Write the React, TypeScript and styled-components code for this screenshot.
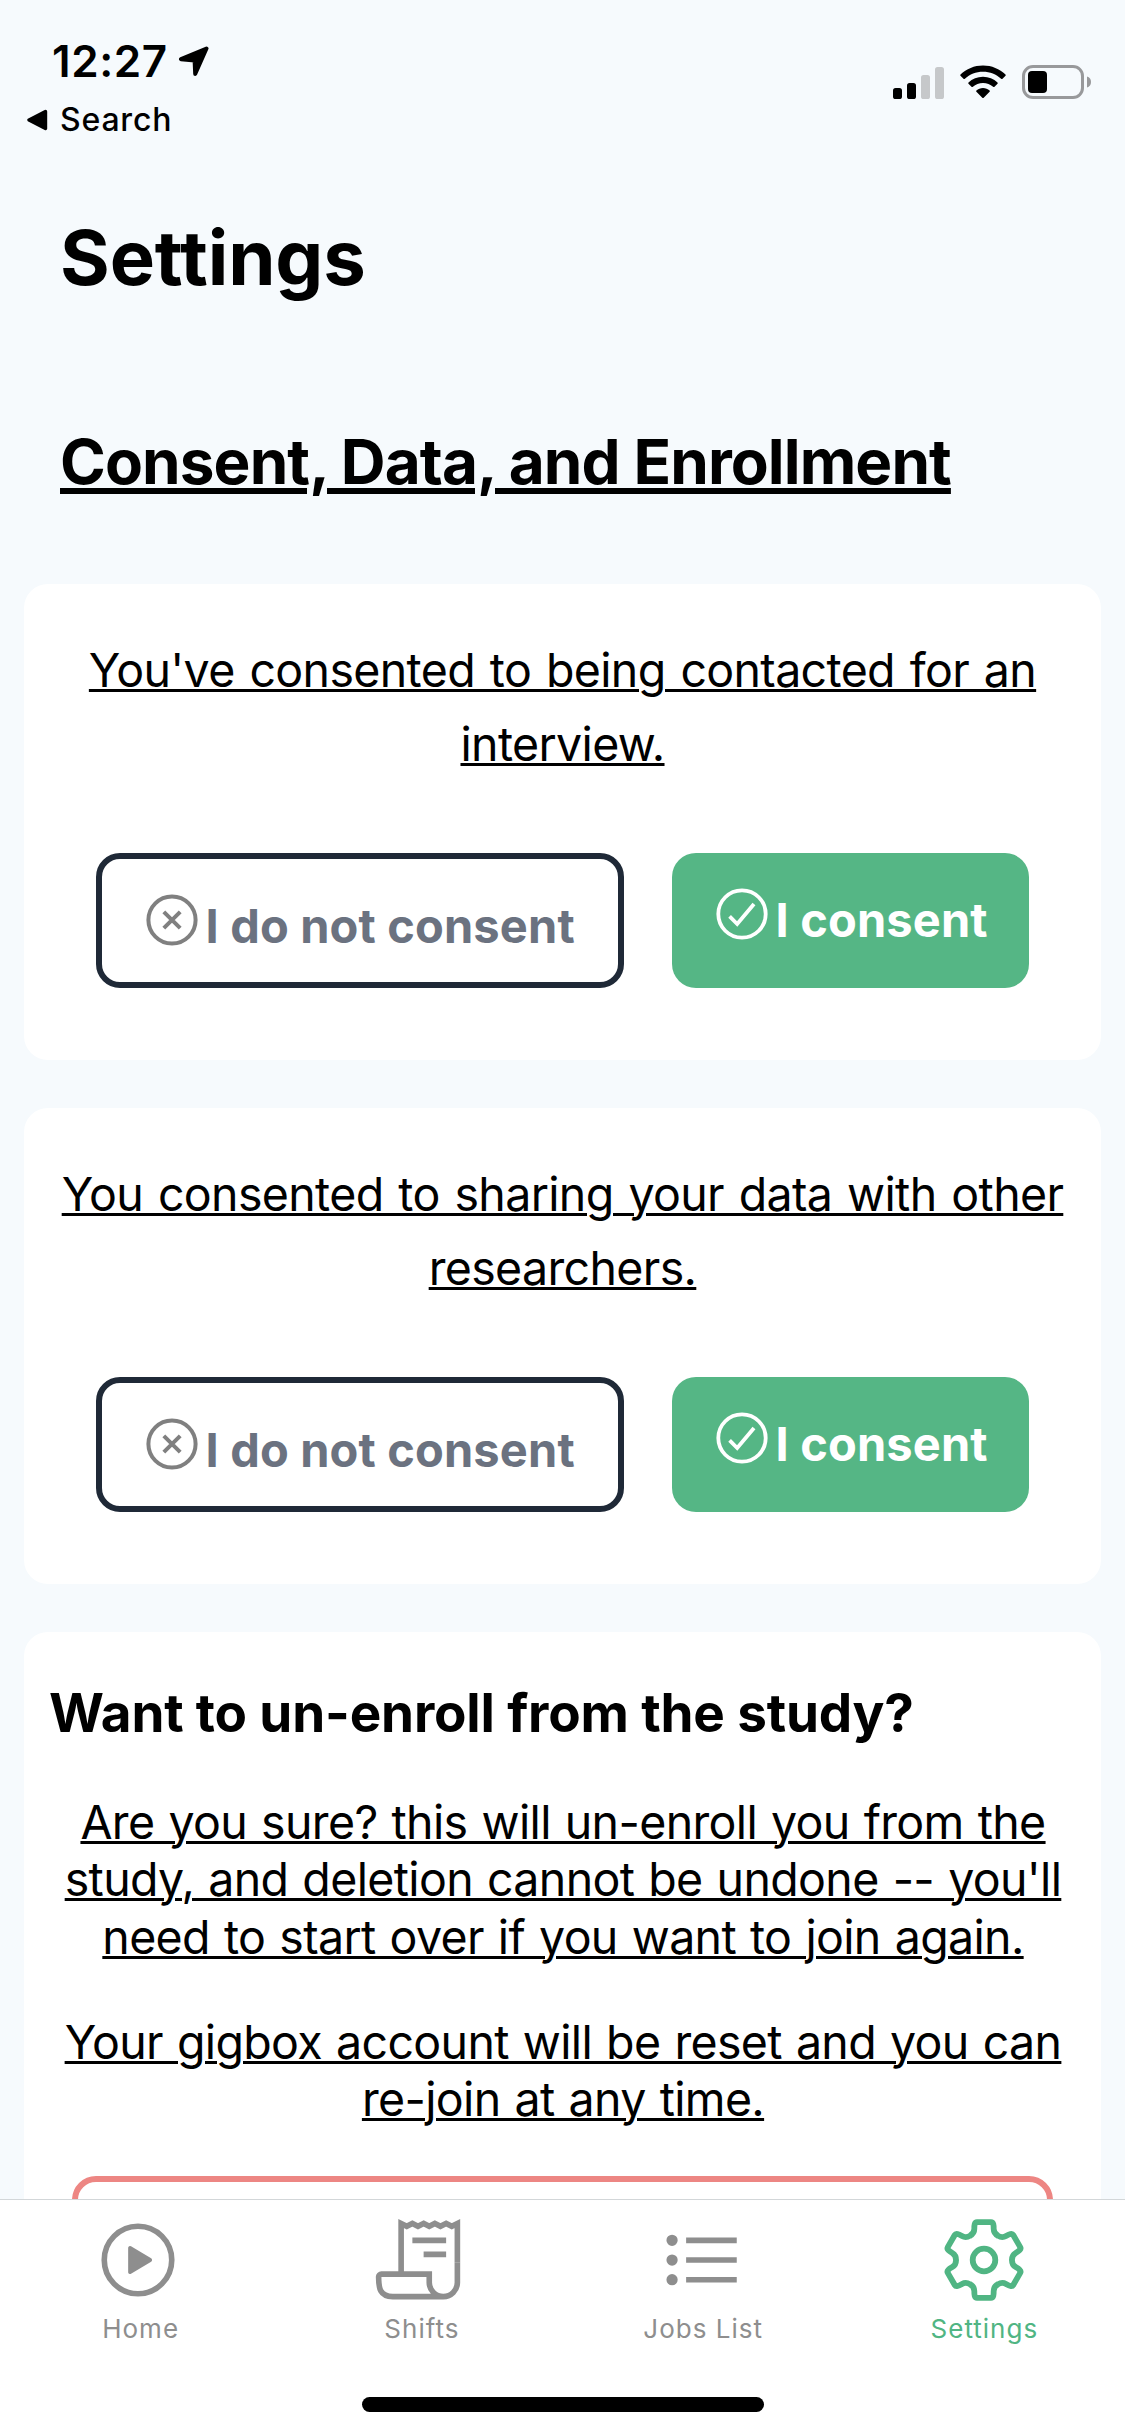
import React from "react";
import styled, { createGlobalStyle, css } from "styled-components";

const GlobalStyle = createGlobalStyle`
  *, *::before, *::after { box-sizing: border-box; }
  body { margin: 0; background: #f6fafd; }
`;

const Screen = styled.div`
  display: flex;
  flex-direction: column;
  width: 1125px;
  height: 2436px;
  overflow: hidden;
  background: #f6fafd;
  color: #000;
  font-family: Inter, "Liberation Sans", sans-serif;
`;

const StatusBar = styled.header`
  display: flex;
  flex: none;
  justify-content: space-between;
  height: 150px;
  padding: 35px 33px 0 27px;
`;

const StatusLeft = styled.div`
  display: flex;
  flex-direction: column;
`;

const ClockRow = styled.div`
  display: flex;
  align-items: center;
  gap: 10px;
  height: 52px;
  padding-left: 25px;
`;

const Clock = styled.span`
  font-size: 44px;
  font-weight: 600;
  line-height: 52px;
  letter-spacing: 0.6px;
`;

const BackRow = styled.div`
  display: flex;
  align-items: center;
  gap: 12px;
  height: 40px;
  margin-top: 13px;
`;

const BackLabel = styled.span`
  font-size: 32px;
  font-weight: 500;
  line-height: 40px;
  letter-spacing: 0.8px;
`;

const StatusRight = styled.div`
  display: flex;
  align-items: flex-end;
  gap: 16px;
  height: 64px;
`;

const Main = styled.main`
  display: flex;
  flex: none;
  flex-direction: column;
  height: 2049px;
  overflow: hidden;
`;

const Title = styled.h1`
  margin: 59px 0 0 60px;
  font-size: 76px;
  font-weight: 700;
  line-height: 96px;
  letter-spacing: -0.1px;
  white-space: nowrap;
`;

const SectionTitle = styled.h2`
  margin: 117px 0 0 60px;
  font-size: 62px;
  font-weight: 700;
  line-height: 80px;
  letter-spacing: -0.9px;
  white-space: nowrap;
  text-decoration: underline;
  text-decoration-thickness: 6px;
  text-underline-offset: 4px;
`;

const Cards = styled.div`
  display: flex;
  flex-direction: column;
  gap: 48px;
  padding: 82px 24px 0;
`;

const Card = styled.section`
  display: flex;
  flex: none;
  flex-direction: column;
  border-radius: 24px;
  background: #fff;
`;

const ConsentCard = styled(Card)`
  align-items: center;
  height: 476px;
  padding-top: 49px;
`;

const Underlined = styled.p<{ $leading: number; $wordSpacing: number }>`
  margin: 0;
  font-size: 46.5px;
  line-height: ${(p) => p.$leading}px;
  letter-spacing: -0.65px;
  word-spacing: ${(p) => p.$wordSpacing}px;
  text-align: center;
  text-decoration: underline;
  text-decoration-thickness: 3px;
  text-underline-offset: 2px;
  white-space: nowrap;
`;

const ButtonRow = styled.div`
  display: flex;
  justify-content: center;
  gap: 48px;
  margin-top: 72px;
`;

const ChoiceButton = styled.button<{ $primary?: boolean }>`
  display: flex;
  align-items: flex-start;
  height: 135px;
  margin: 0;
  padding: 34.5px 0 0 43.5px;
  border-radius: 24px;
  font-family: inherit;
  font-size: 47px;
  font-weight: 700;
  line-height: 56px;
  letter-spacing: 0.15px;
  white-space: nowrap;
  ${(p) =>
    p.$primary
      ? css`
          width: 357px;
          border: 0;
          background: #55b685;
          color: #fff;
        `
      : css`
          width: 528px;
          border: 6px solid #1f2937;
          background: #fff;
          color: #6b7280;
        `}
`;

const ChoiceLabel = styled.span`
  margin: 4px 0 0 8px;
`;

const EnrollCard = styled(Card)`
  height: 640px;
  padding: 48px 24px 0 25px;
`;

const CardHeading = styled.h3`
  margin: 0 0 48px;
  font-size: 53px;
  font-weight: 700;
  line-height: 66px;
  letter-spacing: -0.16px;
  white-space: nowrap;
`;

const EnrollText = styled.div`
  display: flex;
  flex-direction: column;
  gap: 48px;
`;

const DangerButton = styled.button`
  flex: none;
  height: 135px;
  margin: 47.4px 24px 0 23px;
  border: 6px solid #ed8683;
  border-radius: 24px;
  background: #fff;
`;

const TabBar = styled.nav`
  display: grid;
  flex: none;
  grid-template-columns: repeat(4, 281.25px);
  height: 198px;
  padding-top: 15px;
  border-top: 1px solid #d3d7d9;
  background: #fff;
`;

const Tab = styled.a<{ $active?: boolean; $shift?: number }>`
  display: flex;
  flex-direction: column;
  align-items: center;
  color: ${(p) => (p.$active ? "#50b583" : "#8e8e8e")};

  svg {
    margin-right: ${(p) => p.$shift ?? 0}px;
  }
`;

const TabLabel = styled.span`
  margin-top: 8px;
  font-size: 26px;
  line-height: 32px;
  letter-spacing: 1px;
`;

const HomeArea = styled.div`
  display: flex;
  flex: none;
  justify-content: center;
  height: 39px;
  background: #fff;
`;

const HomeIndicator = styled.div`
  width: 402px;
  height: 15px;
  border-radius: 8px;
  background: #000;
`;

const LocationArrow = () => (
  <svg width="31" height="31" viewBox="0 0 31 31">
    <path
      d="M28.5 2.5 L3 13.2 L16.6 14.6 L17.2 28 Z"
      fill="#000"
      stroke="#000"
      strokeWidth="4"
      strokeLinejoin="round"
    />
  </svg>
);

const BackTriangle = () => (
  <svg width="21" height="22" viewBox="0 0 21 22">
    <path d="M18.5 2.5 L2 11 L18.5 19.5 Z" stroke="#000" strokeWidth="3.4" strokeLinejoin="round" />
  </svg>
);

const SignalBars = () => (
  <svg width="51" height="33" viewBox="0 0 51 33">
    <rect x="0" y="22" width="9" height="11" rx="2.6" />
    <rect x="14" y="17" width="9" height="16" rx="2.6" />
    <rect x="28" y="9" width="9" height="24" rx="2.6" fill="#c6c8ca" />
    <rect x="42" y="1" width="9" height="32" rx="2.6" fill="#c6c8ca" />
  </svg>
);

const Wifi = () => (
  <svg width="46" height="34" viewBox="0 0 46 34">
    <path d="M23 0.5C14.3 0.5 6.4 3.9 0.5 9.4c-.4.4-.4 1 0 1.4l3 3c.4.4 1 .4 1.4 0C9.7 9.3 16 6.7 23 6.7s13.3 2.6 18.1 7.1c.4.4 1 .4 1.4 0l3-3c.4-.4.4-1 0-1.4C39.6 3.9 31.7.5 23 .5Z" />
    <path d="M23 11.7c-5.600 0-10.700 2.200-14.500 5.700-.4.400-.4 1 0 1.400l3 3c.4.400 1 .4 1.400 0 2.700-2.400 6.200-3.900 10.100-3.900s7.400 1.500 10.100 3.900c.4.400 1 .4 1.400 0l3-3c.4-.4.4-1 0-1.400-3.800-3.500-8.900-5.700-14.500-5.700Z" />
    <path d="M23 23c-2.500 0-4.800.9-6.600 2.400-.4.400-.4 1 0 1.400l5.900 5.900c.4.400 1 .4 1.400 0l5.900-5.900c.4-.4.400-1 0-1.400C27.800 23.900 25.500 23 23 23Z" />
  </svg>
);

const Battery = () => (
  <svg width="70" height="34" viewBox="0 0 70 34">
    <rect x="1.5" y="1.5" width="59" height="31" rx="9.5" fill="none" stroke="#98999b" strokeWidth="3" />
    <rect x="6" y="6" width="19" height="22" rx="4" />
    <path d="M65 11.5c2.600.7 4 2.800 4 5.500s-1.400 4.800-4 5.500Z" fill="#98999b" />
  </svg>
);

const CrossCircle = () => (
  <svg width="52" height="52" viewBox="0 0 52 52" fill="none" stroke="#808080" strokeWidth="4">
    <circle cx="26" cy="26" r="23.6" />
    <path d="M17.8 17.8 L34.2 34.2 M34.2 17.8 L17.8 34.2" />
  </svg>
);

const CheckCircle = () => (
  <svg width="52" height="52" viewBox="0 0 52 52" fill="none" stroke="#fff" strokeWidth="3.8">
    <circle cx="26" cy="26" r="23.7" />
    <path d="M13.6 28.4 L21.2 36 L38 16" />
  </svg>
);

const TabIcon = styled.svg.attrs({ width: 90, height: 90, viewBox: "0 0 512 512" })`
  display: block;
  flex: none;
  fill: none;
  stroke: currentColor;
  stroke-width: 32px;
`;

const PlayIcon = () => (
  <TabIcon>
    <circle cx="256" cy="256" r="192" />
    <path
      fill="currentColor"
      stroke="none"
      d="M216.32 334.44l114.45-69.14a10.89 10.89 0 000-18.6l-114.45-69.14a10.78 10.78 0 00-16.32 9.31v138.26a10.78 10.78 0 0016.32 9.31z"
    />
  </TabIcon>
);

const ReceiptIcon = () => (
  <TabIcon>
    <path d="M160 336V48l32 16 32-16 31.94 16 32.37-16L320 64l31.79-16 31.93 16L416 48l32.01 16L480 48v224" />
    <path d="M480 272v112a80 80 0 01-80 80 80 80 0 01-80-80v-48H48a15.86 15.86 0 00-16 16c0 64 6.74 112 80 112h288M224 144h192M288 224h128" />
  </TabIcon>
);

const ListIcon = () => (
  <TabIcon>
    <path d="M160 144h288M160 256h288M160 368h288" />
    <g fill="currentColor">
      <circle cx="80" cy="144" r="16" />
      <circle cx="80" cy="256" r="16" />
      <circle cx="80" cy="368" r="16" />
    </g>
  </TabIcon>
);

const GearIcon = () => (
  <svg width="90" height="90" viewBox="-45 -45 90 90" fill="none" stroke="currentColor" strokeWidth="5.8">
    {[0, 60, 120, 180, 240, 300].map((angle) => (
      <path
        key={angle}
        transform={`rotate(${angle})`}
        d="M-14.2 -24.1 C-11 -25.8 -9.7 -28 -9.7 -31 C-9.7 -35 -9.5 -37.8 -7 -37.8 L7 -37.8 C9.5 -37.8 9.7 -35 9.7 -31 C9.7 -28 11 -25.8 14.2 -24.1"
      />
    ))}
    <circle r="11.3" />
  </svg>
);

const ConsentPanel = ({ lines }: { lines: [string, string] }) => (
  <ConsentCard>
    <Underlined $leading={74} $wordSpacing={2.4}>
      {lines[0]}
      <br />
      {lines[1]}
    </Underlined>
    <ButtonRow>
      <ChoiceButton>
        <CrossCircle />
        <ChoiceLabel>I do not consent</ChoiceLabel>
      </ChoiceButton>
      <ChoiceButton $primary>
        <CheckCircle />
        <ChoiceLabel>I consent</ChoiceLabel>
      </ChoiceButton>
    </ButtonRow>
  </ConsentCard>
);

export default function App() {
  return (
    <Screen>
      <GlobalStyle />
      <StatusBar>
        <StatusLeft>
          <ClockRow>
            <Clock>12:27</Clock>
            <LocationArrow />
          </ClockRow>
          <BackRow>
            <BackTriangle />
            <BackLabel>Search</BackLabel>
          </BackRow>
        </StatusLeft>
        <StatusRight>
          <SignalBars />
          <Wifi />
          <Battery />
        </StatusRight>
      </StatusBar>
      <Main>
        <Title>Settings</Title>
        <SectionTitle>Consent, Data, and Enrollment</SectionTitle>
        <Cards>
          <ConsentPanel lines={["You've consented to being contacted for an", "interview."]} />
          <ConsentPanel lines={["You consented to sharing your data with other", "researchers."]} />
          <EnrollCard>
            <CardHeading>Want to un-enroll from the study?</CardHeading>
            <EnrollText>
              <Underlined $leading={57.3} $wordSpacing={1.6}>
                Are you sure? this will un-enroll you from the
                <br />
                study, and deletion cannot be undone -- you'll
                <br />
                need to start over if you want to join again.
              </Underlined>
              <Underlined $leading={57.3} $wordSpacing={1.6}>
                Your gigbox account will be reset and you can
                <br />
                re-join at any time.
              </Underlined>
            </EnrollText>
            <DangerButton />
          </EnrollCard>
        </Cards>
      </Main>
      <TabBar>
        <Tab $shift={6}>
          <PlayIcon />
          <TabLabel>Home</TabLabel>
        </Tab>
        <Tab $shift={7}>
          <ReceiptIcon />
          <TabLabel>Shifts</TabLabel>
        </Tab>
        <Tab>
          <ListIcon />
          <TabLabel>Jobs List</TabLabel>
        </Tab>
        <Tab $active>
          <GearIcon />
          <TabLabel>Settings</TabLabel>
        </Tab>
      </TabBar>
      <HomeArea>
        <HomeIndicator />
      </HomeArea>
    </Screen>
  );
}
